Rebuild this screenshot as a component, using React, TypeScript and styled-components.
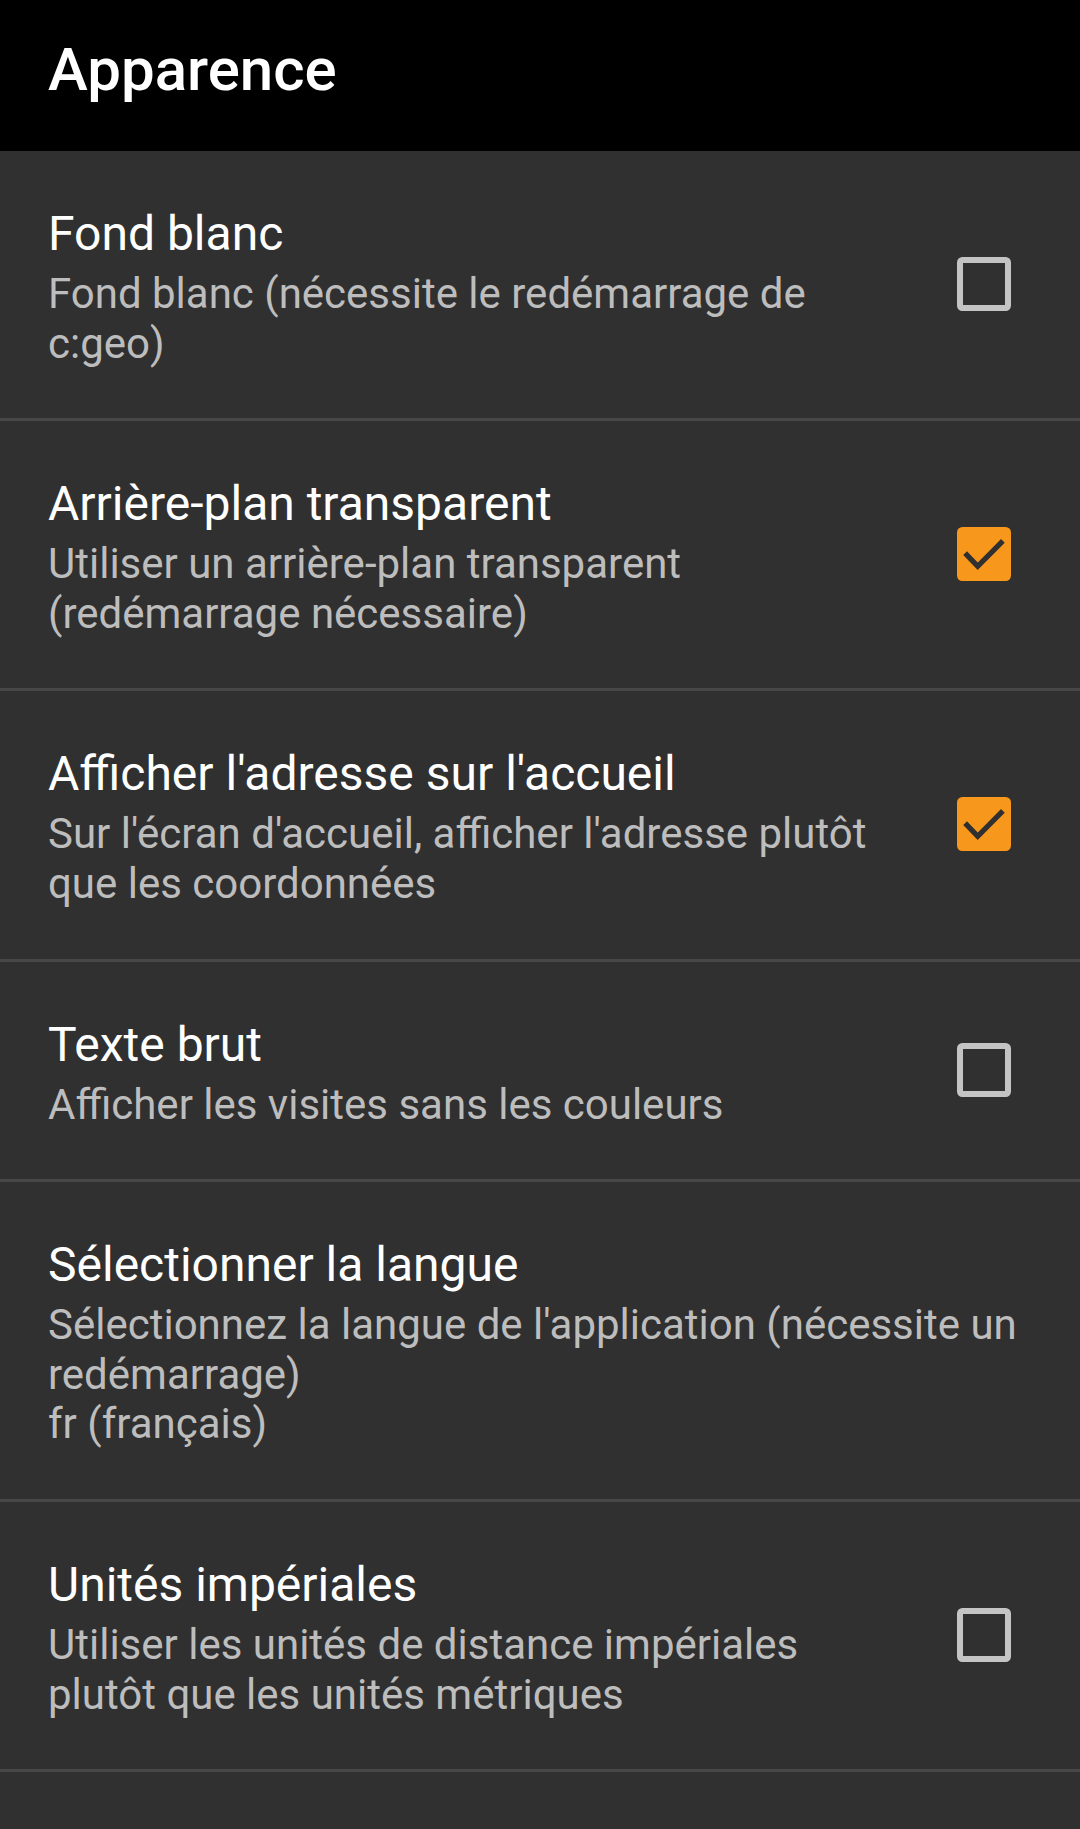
import React from "react";
import styled, { createGlobalStyle } from "styled-components";

const Global = createGlobalStyle`
  html, body { margin: 0; padding: 0; background: #303030; }
  body { font-family: Roboto, "Noto Sans", "Liberation Sans", sans-serif; }
  * { box-sizing: border-box; }
`;

const Page = styled.div`
  width: 1080px;
  min-height: 1829px;
  background: #303030;
  display: flex;
  flex-direction: column;
`;

const Header = styled.header`
  height: 151px;
  background: #000;
  padding: 35px 48px 0;
`;

const HeaderTitle = styled.h1`
  margin: 0;
  font-family: Roboto, sans-serif;
  font-weight: 500;
  font-size: 60px;
  line-height: 70px;
  color: #fff;
`;

const Row = styled.div<{ $first?: boolean; $wide?: boolean }>`
  display: flex;
  align-items: center;
  padding: 55px ${(p) => (p.$wide ? "44px" : "69px")} 50px 48px;
  border-top: ${(p) => (p.$first ? "none" : "3px solid #474747")};
`;

const Texts = styled.div<{ $wide?: boolean }>`
  flex: 1;
  display: flex;
  flex-direction: column;
  gap: 7px;
  margin-right: ${(p) => (p.$wide ? "0" : "58px")};
`;

const Title = styled.div`
  font-size: 48px;
  line-height: 56px;
  color: #ffffff;
`;

const Summary = styled.div`
  font-size: 42px;
  line-height: 49.6px;
  color: #bdbdbd;
`;

const Divider = styled.div`
  border-top: 3px solid #474747;
`;

const Box = styled.svg`
  flex: none;
  width: 54px;
  height: 54px;
  margin-top: -6px;
  display: block;
`;

const CheckBox: React.FC<{ checked: boolean }> = ({ checked }) =>
  checked ? (
    <Box viewBox="0 0 18 18">
      <rect x="0" y="0" width="18" height="18" rx="1.8" fill="#f7981d" />
      <polyline
        points="2.7,8.7 6.9,13.1 15.3,4.6"
        fill="none"
        stroke="#303030"
        strokeWidth="1.75"
      />
    </Box>
  ) : (
    <Box viewBox="0 0 18 18">
      <rect
        x="1"
        y="1"
        width="16"
        height="16"
        rx="0.8"
        fill="none"
        stroke="#c4c4c4"
        strokeWidth="2"
      />
    </Box>
  );

type Pref = {
  title: string;
  summary: string[];
  checked?: boolean;
};

const prefs: Pref[] = [
  {
    title: "Fond blanc",
    summary: ["Fond blanc (nécessite le redémarrage de c:geo)"],
    checked: false,
  },
  {
    title: "Arrière-plan transparent",
    summary: ["Utiliser un arrière-plan transparent (redémarrage nécessaire)"],
    checked: true,
  },
  {
    title: "Afficher l'adresse sur l'accueil",
    summary: [
      "Sur l'écran d'accueil, afficher l'adresse plutôt que les coordonnées",
    ],
    checked: true,
  },
  {
    title: "Texte brut",
    summary: ["Afficher les visites sans les couleurs"],
    checked: false,
  },
  {
    title: "Sélectionner la langue",
    summary: [
      "Sélectionnez la langue de l'application (nécessite un redémarrage)",
      "fr (français)",
    ],
  },
  {
    title: "Unités impériales",
    summary: [
      "Utiliser les unités de distance impériales plutôt que les unités métriques",
    ],
    checked: false,
  },
];

export default function App() {
  return (
    <>
      <Global />
      <Page>
        <Header>
          <HeaderTitle>Apparence</HeaderTitle>
        </Header>
        {prefs.map((p, i) => {
          const wide = p.checked === undefined;
          return (
            <Row key={p.title} $first={i === 0} $wide={wide}>
              <Texts $wide={wide}>
                <Title>{p.title}</Title>
                <Summary>
                  {p.summary.map((s) => (
                    <div key={s}>{s}</div>
                  ))}
                </Summary>
              </Texts>
              {!wide && <CheckBox checked={!!p.checked} />}
            </Row>
          );
        })}
        <Divider />
      </Page>
    </>
  );
}
